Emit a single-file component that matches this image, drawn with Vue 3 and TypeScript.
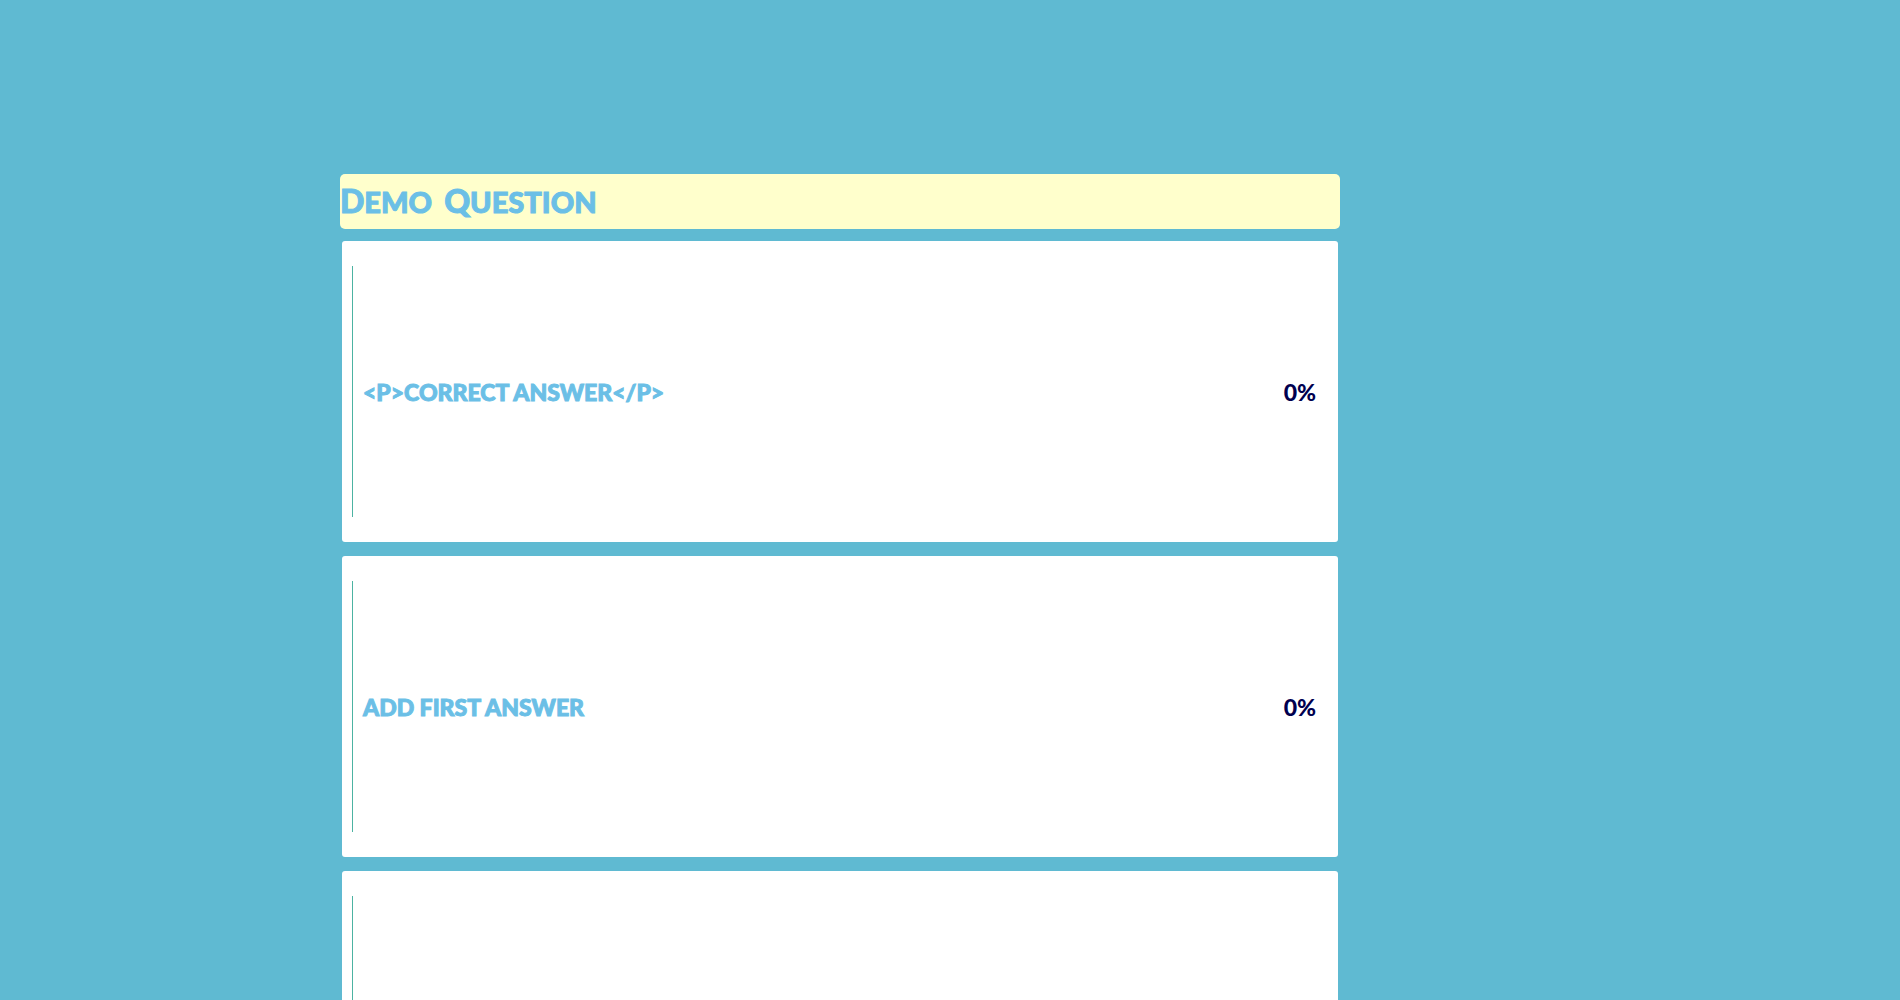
<script setup lang="ts">
interface Answer {
  id: number
  text: string
  share: string
}

const titleWords: string[] = ['Demo', 'Question']

const answers: Answer[] = [
  { id: 1, text: '<p>Correct answer</p>', share: '0%' },
  { id: 2, text: 'Add first answer', share: '0%' },
  { id: 3, text: '', share: '' },
]
</script>

<template>
  <main class="page">
    <section class="poll">
      <h1 class="title">
        <span v-for="word in titleWords" :key="word" class="word">{{ word }}</span>
      </h1>
      <ul class="answers">
        <li v-for="answer in answers" :key="answer.id" class="answer">
          <div class="body">
            <span class="label">{{ answer.text }}</span>
            <span class="share">{{ answer.share }}</span>
          </div>
        </li>
      </ul>
    </section>
  </main>
</template>

<style>
body {
  background: #5fbad2;
}
</style>

<style scoped>
.page {
  display: grid;
  grid-template-columns: 17fr 50fr 28fr;
  box-sizing: border-box;
  height: 100vh;
  padding-top: 174px;
  overflow: hidden;
  font-family: Lato, "Open Sans", sans-serif;
  font-weight: 900;
  color: #6bbfe6;
}

.poll {
  grid-column: 2;
  min-width: 0;
}

.title {
  display: flex;
  gap: 12px;
  margin: 0 0 12px;
  border-radius: 5px;
  background: #ffffcc;
  font-size: 29px;
  font-weight: 900;
  line-height: 55px;
  -webkit-text-stroke: 1px currentColor;
}

.word {
  display: block;
  text-transform: uppercase;
}

.word::first-letter {
  font-size: 32px;
  line-height: 1;
}

.answers {
  display: flex;
  flex-direction: column;
  gap: 14px;
  margin: 0 2px;
  padding: 0;
  list-style: none;
}

.answer {
  padding: 25px 10px;
  border-radius: 3px;
  background: #fff;
}

.body {
  display: flex;
  align-items: center;
  justify-content: space-between;
  min-height: 251px;
  padding: 0 12px 0 10px;
  border-left: 1px solid #4cb3a2;
  font-size: 23px;
  line-height: 32px;
}

.label {
  text-transform: uppercase;
  -webkit-text-stroke: 1px currentColor;
}

.share {
  color: #00004f;
}
</style>
